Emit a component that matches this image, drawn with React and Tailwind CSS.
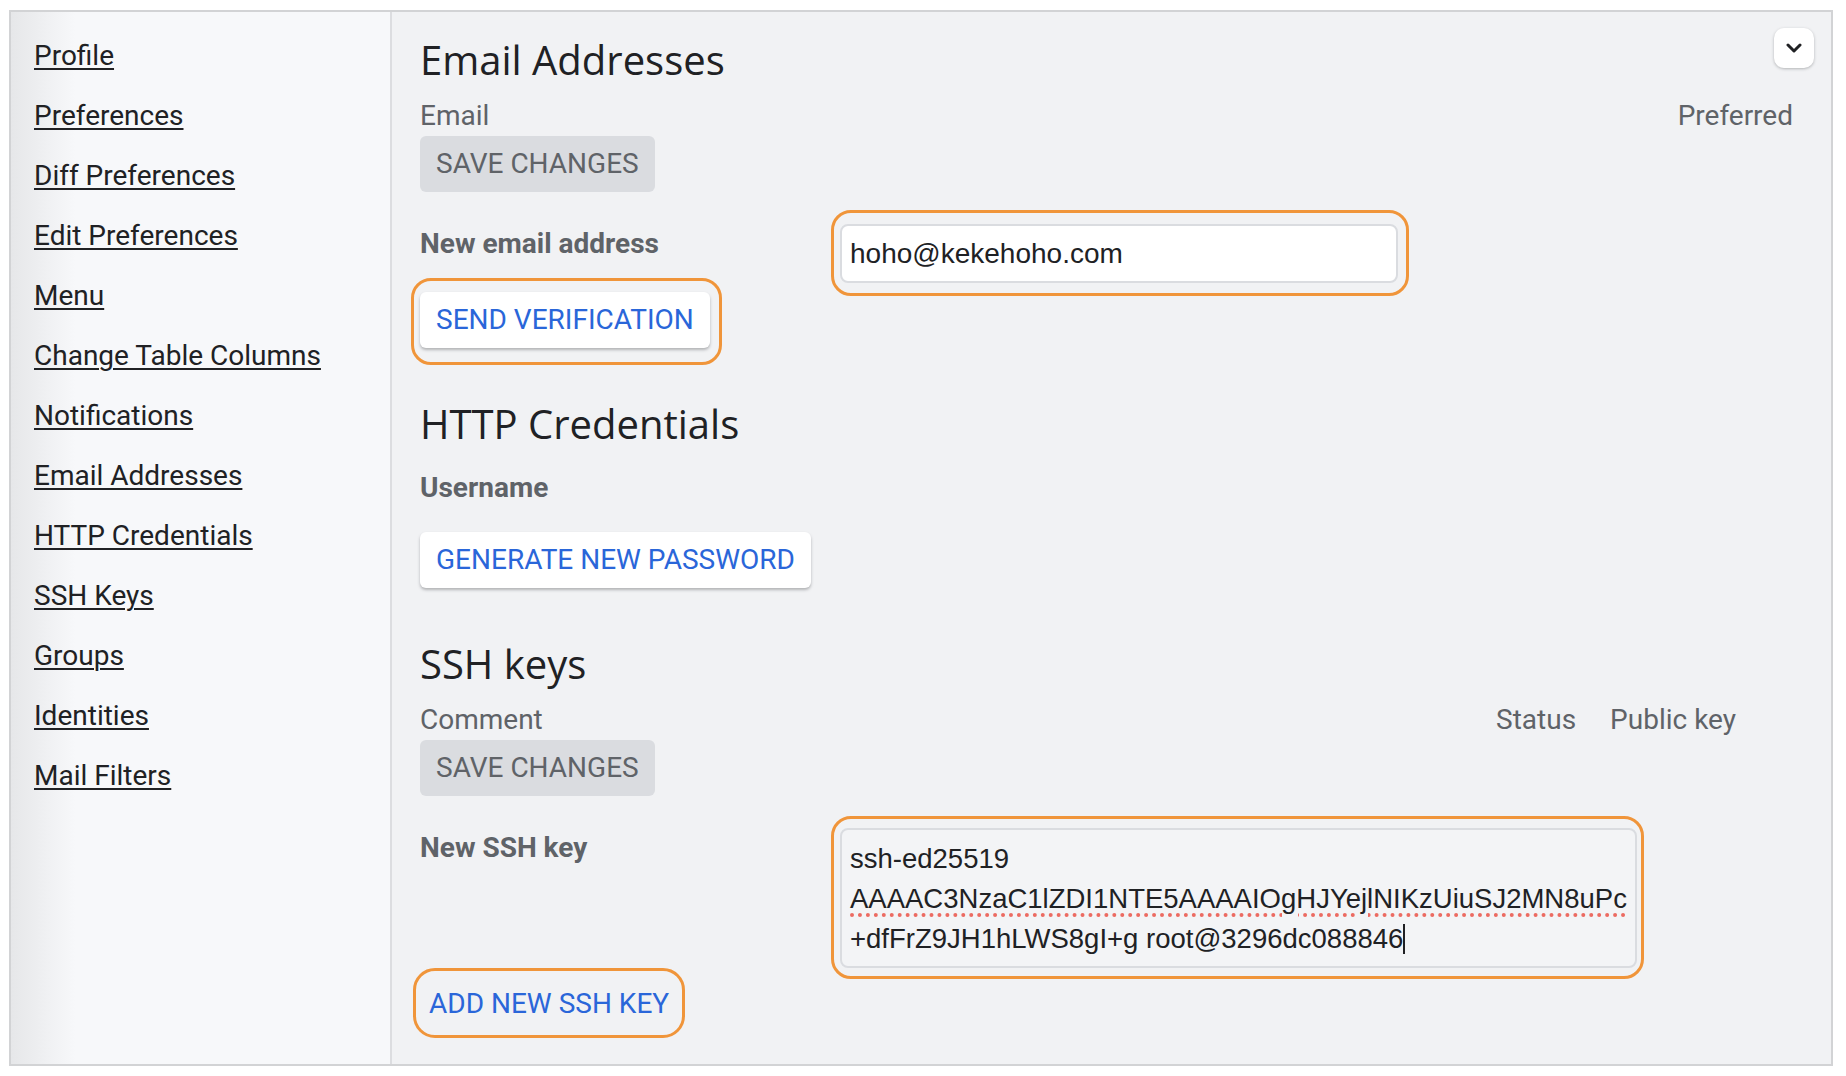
import React from "react";

const links = [
  "Profile",
  "Preferences",
  "Diff Preferences",
  "Edit Preferences",
  "Menu",
  "Change Table Columns",
  "Notifications",
  "Email Addresses",
  "HTTP Credentials",
  "SSH Keys",
  "Groups",
  "Identities",
  "Mail Filters",
];

function Highlight({ className }) {
  return (
    <span
      className={
        "pointer-events-none absolute border-[3px] border-[#f0953a] " + className
      }
    />
  );
}

export default function App() {
  return (
    <div className="w-[1846px] h-[1076px] bg-white pt-[10px] pl-[9px] font-['Roboto',sans-serif]">
      <div className="w-[1824px] h-[1056px] border-2 border-[#d2d3d5] flex overflow-hidden">
        <aside className="w-[381px] shrink-0 border-r-2 border-[#dcdde0] bg-[linear-gradient(to_right,#e6e7e9_0px,#f7f8fa_64px)] pl-[23px] pt-[24px]">
          <nav className="flex flex-col gap-[20px]">
            {links.map((l) => (
              <a
                key={l}
                href="#"
                className="block w-fit text-[28px] leading-[40px] text-[#202124] underline [text-decoration-thickness:2px] [text-underline-offset:3px]"
              >
                {l}
              </a>
            ))}
          </nav>
        </aside>

        <main className="relative flex-1 bg-[#f1f2f4] pl-[28px] pt-[20px] text-[28px] leading-[40px]">
          <button className="absolute top-[16px] right-[17px] w-[40px] h-[40px] rounded-[10px] bg-white shadow-[0_1px_3px_rgba(60,64,67,0.35)] flex items-center justify-center">
            <svg width="16" height="10" viewBox="0 0 16 10">
              <path
                d="M2 2 L8 8 L14 2"
                fill="none"
                stroke="#202124"
                strokeWidth="3"
                strokeLinecap="round"
                strokeLinejoin="round"
              />
            </svg>
          </button>

          {/* Email Addresses */}
          <h2 className="font-['Open_Sans',sans-serif] text-[40px] leading-[56px] text-[#202124]">
            Email Addresses
          </h2>
          <div className="mt-[8px] flex justify-between pr-[38px] text-[#5f6368]">
            <span>Email</span>
            <span>Preferred</span>
          </div>
          <button className="block h-[56px] px-[16px] rounded-[6px] bg-[#dadce0] text-[#5f6368] uppercase">
            Save changes
          </button>

          <div className="mt-[31px] flex items-start">
            <span className="w-[420px] pt-[1px] font-bold text-[#5f6368]">New email address</span>
            <div className="relative mt-[1px]">
              <div className="w-[558px] h-[59px] rounded-[8px] border-2 border-[#dadce0] bg-white pl-[8px] pt-[1px] flex items-center font-['Liberation_Sans',sans-serif] text-[28px] text-[#202124]">
                hoho@kekehoho.com
              </div>
              <Highlight className="-left-[9px] -top-[14px] -right-[11px] -bottom-[13px] rounded-[20px]" />
            </div>
          </div>

          <div className="relative mt-[9px] w-fit">
            <button className="block h-[56px] px-[16px] rounded-[6px] bg-white text-[#2a66d9] uppercase shadow-[0_2px_3px_rgba(60,64,67,0.35)]">
              Send verification
            </button>
            <Highlight className="-left-[9px] -top-[14px] -right-[12px] -bottom-[17px] rounded-[20px]" />
          </div>

          {/* HTTP Credentials */}
          <h2 className="mt-[48px] font-['Open_Sans',sans-serif] text-[40px] leading-[56px] text-[#202124]">
            HTTP Credentials
          </h2>
          <div className="mt-[16px] font-bold text-[#5f6368]">Username</div>
          <button className="mt-[24px] block h-[56px] px-[16px] rounded-[6px] bg-white text-[#2a66d9] uppercase shadow-[0_2px_3px_rgba(60,64,67,0.35)]">
            Generate new password
          </button>

          {/* SSH keys */}
          <h2 className="mt-[48px] font-['Open_Sans',sans-serif] text-[40px] leading-[56px] text-[#202124]">
            SSH keys
          </h2>
          <div className="mt-[8px] flex items-start pr-[95px] text-[#5f6368]">
            <span className="flex-1">Comment</span>
            <span>Status</span>
            <span className="ml-[34px]">Public key</span>
          </div>
          <button className="block h-[56px] px-[16px] rounded-[6px] bg-[#dadce0] text-[#5f6368] uppercase">
            Save changes
          </button>

          <div className="mt-[31px] flex items-start">
            <span className="w-[420px] pt-[1px] font-bold text-[#5f6368]">New SSH key</span>
            <div className="relative mt-[1px]">
              <div className="w-[797px] h-[140px] rounded-[8px] border-2 border-[#dadce0] bg-[#f3f4f6] pl-[8px] pt-[9px] font-['Liberation_Sans',sans-serif] text-[27.5px] leading-[40px] text-[#202124] whitespace-nowrap">
                <div>ssh-ed25519</div>
                <div>
                  <span className="underline decoration-dotted decoration-[#ec6b62] [text-decoration-thickness:4px] [text-underline-offset:5px]">
                    AAAAC3NzaC1lZDI1NTE5AAAAIOgHJYejlNIKzUiuSJ2MN8uPc
                  </span>
                </div>
                <div className="flex items-center">
                  <span>+dfFrZ9JH1hLWS8gI+g root@3296dc088846</span>
                  <span className="inline-block w-[2px] h-[30px] bg-[#202124]" />
                </div>
              </div>
              <Highlight className="-left-[9px] -top-[12px] -right-[7px] -bottom-[11px] rounded-[20px]" />
            </div>
          </div>

          <div className="relative mt-[8px] -ml-[7px] w-fit">
            <button className="block h-[56px] px-[16px] rounded-[6px] text-[#2a66d9] uppercase">
              Add new SSH key
            </button>
            <Highlight className="left-0 -top-[8px] right-0 -bottom-[6px] rounded-[22px]" />
          </div>
        </main>
      </div>
    </div>
  );
}
